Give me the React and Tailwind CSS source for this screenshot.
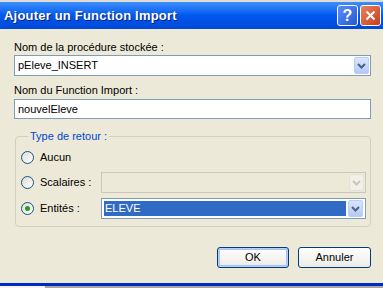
import React from 'react';

const font = { fontFamily: '"Liberation Sans", Arial, sans-serif' };

// little XP style dropdown arrow button
const DropButton = ({ disabled }) => (
  <div
    className={
      disabled
        ? 'w-[15px] h-[17px] rounded-[2px] border border-[#e4e2d8] bg-[#f1efe6] flex items-center justify-center'
        : 'w-[15px] h-[17px] rounded-[2px] border border-[#b9cdf7] bg-gradient-to-b from-[#dae6fd] to-[#b4c9f5] flex items-center justify-center'
    }
  >
    <svg width="9" height="6" viewBox="0 0 9 6">
      <path d="M1 1 L4.5 4.5 L8 1" fill="none" stroke={disabled ? '#c9c7ba' : '#4d6185'} strokeWidth="2" />
    </svg>
  </div>
);

const Radio = ({ checked }) => (
  <div className="w-[13px] h-[13px] rounded-full border border-[#1c5180] bg-gradient-to-br from-[#dcdcd6] to-[#ffffff] flex items-center justify-center shrink-0">
    {checked && <div className="w-[5px] h-[5px] rounded-full bg-[#21a121]" />}
  </div>
);

const Label = ({ children }) => (
  <div className="h-[13px] leading-[13px] text-[11px] text-black">{children}</div>
);

export default function App() {
  return (
    <div className="w-[383px] h-[288px] overflow-hidden bg-[#ECE9D8] flex flex-col" style={font}>
      {/* strip behind the window */}
      <div className="h-[2px] bg-[#dedcd4]" />

      {/* Title bar */}
      <div className="h-[27px] bg-gradient-to-b from-[#3d8ffb] via-[#0058ee] to-[#0048d8] flex items-center pl-[4px] pr-[2px]">
        <span className="text-white font-bold text-[13px] tracking-[0.2px] flex-1 [text-shadow:1px_1px_0_#0a246a]">
          Ajouter un Function Import
        </span>
        <div className="flex gap-[2px]">
          <div className="w-[21px] h-[21px] rounded-[3px] border border-white bg-gradient-to-br from-[#5b8cf6] to-[#2559d8] flex items-center justify-center">
            <span className="text-white font-bold text-[16px] leading-none">?</span>
          </div>
          <div className="w-[21px] h-[21px] rounded-[3px] border border-white bg-gradient-to-br from-[#e8845f] to-[#c6391a] flex items-center justify-center">
            <svg width="11" height="11" viewBox="0 0 11 11">
              <path d="M1.5 1.5 L9.5 9.5 M9.5 1.5 L1.5 9.5" stroke="white" strokeWidth="2" />
            </svg>
          </div>
        </div>
      </div>

      {/* Body */}
      <div className="flex-1 flex flex-col pl-[14px] pr-[12px] pt-[12px]">
        <Label>Nom de la procédure stockée :</Label>
        <div className="mt-[1px] h-[21px] w-[357px] border border-[#7f9db9] bg-white flex items-center pl-[3px] pr-[1px]">
          <span className="flex-1 text-[11px]">pEleve_INSERT</span>
          <DropButton />
        </div>

        <div className="mt-[8px]">
          <Label>Nom du Function Import :</Label>
        </div>
        <div className="mt-[2px] h-[20px] w-[357px] border border-[#7f9db9] bg-white flex items-center pl-[3px]">
          <span className="text-[11px]">nouvelEleve</span>
        </div>

        <fieldset className="mt-[11px] ml-[1px] w-[356px] border border-[#d0d0bf] rounded-[4px] pl-[5px] pr-[4px] pb-[7px]">
          <legend className="ml-[7px] px-[2px] text-[11px] leading-[13px] text-[#0046d5]">Type de retour :</legend>
          <div className="mt-[4px] h-[21px] flex items-center">
            <Radio />
            <span className="ml-[6px] text-[11px]">Aucun</span>
          </div>
          <div className="mt-[4px] h-[21px] flex items-center">
            <Radio />
            <span className="ml-[6px] text-[11px] w-[61px]">Scalaires :</span>
            <div className="h-[21px] flex-1 border border-[#c9c7ba] bg-[#ece9d8] flex items-center justify-end pr-[1px]">
              <DropButton disabled />
            </div>
          </div>
          <div className="mt-[5px] h-[21px] flex items-center">
            <Radio checked />
            <span className="ml-[6px] text-[11px] w-[61px]">Entités :</span>
            <div className="h-[21px] flex-1 border border-[#7f9db9] bg-white flex items-center p-[2px] gap-[2px]">
              <div className="flex-1 h-full bg-[#316ac5] flex items-center pl-[1px]">
                <span className="text-white text-[11px]">ELEVE</span>
              </div>
              <DropButton />
            </div>
          </div>
        </fieldset>

        <div className="mt-[20px] flex justify-end gap-[9px] pr-[0px]">
          <button className="w-[72px] h-[21px] rounded-[3px] border border-[#003c74] bg-gradient-to-b from-[#ffffff] to-[#ecebe6] shadow-[inset_0_0_0_1px_#b8d0f8,inset_0_0_0_2px_#a7c3f2] text-[11px] text-black">
            OK
          </button>
          <button className="w-[73px] h-[21px] rounded-[3px] border border-[#003c74] bg-gradient-to-b from-[#ffffff] to-[#ecebe6] text-[11px] text-black">
            Annuler
          </button>
        </div>
      </div>

      {/* bottom edge of the window */}
      <div className="h-[3px] bg-[#0029c6] shrink-0" />
      <div className="h-[2px] flex shrink-0">
        <div className="w-[45px] bg-[#f4f3ee]" />
        <div className="flex-1 bg-[#a8a6a0]" />
      </div>
    </div>
  );
}
